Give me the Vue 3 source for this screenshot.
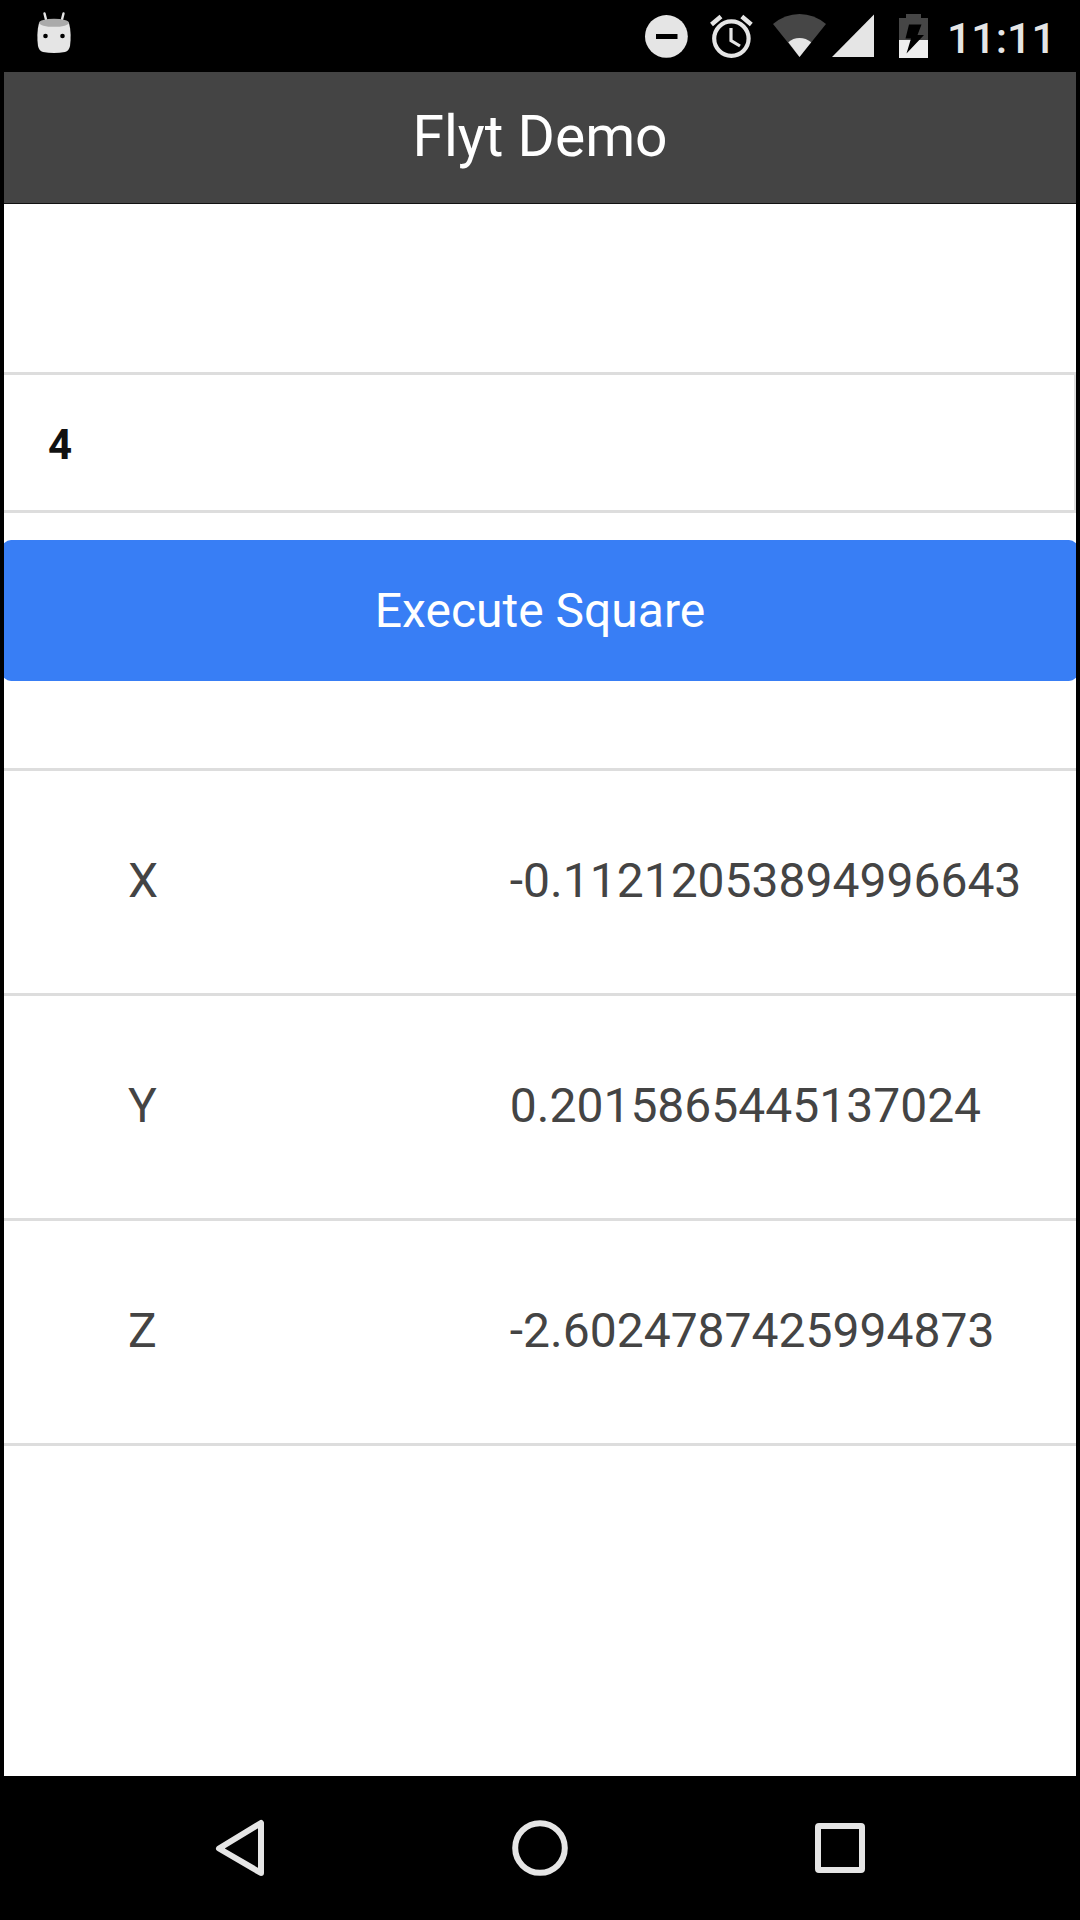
<script setup>
import { ref } from 'vue'

const side = ref('4')
const position = [
  { axis: 'X', value: '-0.11212053894996643' },
  { axis: 'Y', value: '0.2015865445137024' },
  { axis: 'Z', value: '-2.6024787425994873' },
]
</script>

<template>
  <div class="screen">
    <div class="status">
      <svg class="robot" width="36" height="48" viewBox="0 0 36 48" aria-hidden="true">
        <path d="M8.500 1.500l2 8M27.500 1.500l-2 8" stroke="#e5e5e5" stroke-width="2.400" stroke-linecap="round" />
        <path d="M3 11C1 18 1 27 2 34Q3 39 7 40Q18 42 29 40Q33 39 34 34C35 27 35 18 33 11Z" fill="#e5e5e5" />
        <ellipse cx="18" cy="10.800" rx="15" ry="4" fill="#aaa" />
        <circle cx="9.500" cy="24" r="2.300" fill="#000" />
        <circle cx="26.500" cy="24" r="2.300" fill="#000" />
      </svg>
      <div class="indicators">
        <svg width="46" height="48" viewBox="0 0 46 48" aria-hidden="true">
          <circle cx="22.400" cy="24.400" r="21.400" fill="#e5e5e5" />
          <path d="M12 22h21.500v5H12z" fill="#000" />
        </svg>
        <svg width="46" height="48" viewBox="0 0 46 48" fill="none" stroke="#e5e5e5" aria-hidden="true">
          <circle cx="23.400" cy="26.600" r="17.200" stroke-width="4.200" />
          <path d="M3.500 12.500l9.500-8M43.300 12.500l-9.500-8" stroke-width="4.500" />
          <path d="M23 16v12.500l9 5.500" stroke-width="3.200" />
        </svg>
        <div class="radio">
          <svg width="60" height="48" viewBox="0 0 60 48" aria-hidden="true">
            <path d="M27.500 45L1 12Q13 2 27.500 2T54 12Z" fill="#464646" />
            <path d="M27.500 45L16.300 30.300Q21 26 27.500 26T39.200 30.300Z" fill="#e5e5e5" />
          </svg>
          <svg width="48" height="48" viewBox="0 0 48 48" aria-hidden="true">
            <path d="M0 45L42 2.500V45Z" fill="#e5e5e5" />
          </svg>
        </div>
        <svg width="31" height="48" viewBox="0 0 31 48" aria-hidden="true">
          <path d="M1 6h7V2h15v4h7v22H1z" fill="#464646" />
          <path d="M1 28h29v18H1z" fill="#eee" />
          <path d="M11 12.500h12.500l-4 10.500h6.500L8.500 41.500l4.500-15H7.500z" fill="#000" />
        </svg>
        <time class="clock">11:11</time>
      </div>
    </div>

    <header class="bar">
      <h1>Flyt Demo</h1>
    </header>

    <main class="content">
      <input v-model="side" class="side" type="text" inputmode="decimal" aria-label="Side length" />
      <button class="execute" type="button">Execute Square</button>
      <table class="position">
        <tbody>
          <tr v-for="row in position" :key="row.axis">
            <th scope="row">{{ row.axis }}</th>
            <td>{{ row.value }}</td>
          </tr>
        </tbody>
      </table>
    </main>

    <nav class="keys">
      <button type="button" aria-label="Back">
        <svg width="60" height="60" viewBox="0 0 60 60">
          <path d="M51 5V55L9 30.500Z" fill="none" stroke="#e5e5e5" stroke-width="6" stroke-linejoin="round" />
        </svg>
      </button>
      <button type="button" aria-label="Home">
        <svg width="60" height="60" viewBox="0 0 60 60">
          <circle cx="30" cy="30" r="24.800" fill="none" stroke="#e5e5e5" stroke-width="6" />
        </svg>
      </button>
      <button type="button" aria-label="Overview">
        <svg width="60" height="60" viewBox="0 0 60 60">
          <path d="M9 5h42a4 4 0 0 1 4 4v42a4 4 0 0 1-4 4H9a4 4 0 0 1-4-4V9a4 4 0 0 1 4-4zM11 11v38h38V11z" fill="#e5e5e5" fill-rule="evenodd" />
        </svg>
      </button>
    </nav>
  </div>
</template>

<style>
body {
  margin: 0;
  background: #000;
}
</style>

<style scoped>
.screen {
  display: flex;
  flex-direction: column;
  min-height: 100vh;
  background: #000;
  color: #444;
  font-family: Roboto, "Noto Sans", sans-serif;
  font-size: 48px;
}

svg {
  display: block;
}

.status {
  display: flex;
  align-items: center;
  justify-content: space-between;
  height: 72px;
  padding: 0 24px 0 36px;
}

.indicators {
  display: flex;
  align-items: center;
  gap: 18px;
}

.radio {
  display: flex;
}

.clock {
  padding-top: 4px;
  color: #e5e5e5;
  font-size: 43px;
  font-weight: 500;
  line-height: 48px;
}

.bar {
  box-sizing: border-box;
  height: 132px;
  margin: 0 4px;
  border-bottom: 1px solid #111;
  background: #444;
}

h1 {
  margin: 0;
  color: #fff;
  font-size: 57px;
  font-weight: 400;
  line-height: 130px;
  text-align: center;
}

.content {
  flex: 1;
  margin: 0 4px;
  padding-top: 168px;
  overflow: hidden;
  background: #fff;
}

.side {
  display: block;
  box-sizing: border-box;
  width: 100%;
  height: 141px;
  padding: 4px 44px 0;
  border: solid #ddd;
  border-width: 3px 2px 3px 0;
  border-radius: 0;
  outline: 0;
  background: #fff;
  color: #111;
  font-family: inherit;
  font-size: 42px;
  font-weight: 700;
}

.execute {
  display: block;
  width: calc(100% + 4px);
  height: 141px;
  margin: 27px -2px 87px;
  padding: 0;
  border: 0;
  border-radius: 9px;
  background: #387ef5;
  color: #fff;
  font-family: inherit;
  font-size: 48px;
  line-height: 141px;
}

.position {
  width: 100%;
  border-collapse: collapse;
  border-top: 3px solid #ddd;
  table-layout: fixed;
}

.position tr {
  height: 225px;
  border-bottom: 3px solid #ddd;
}

.position th,
.position td {
  padding: 0 0 4px;
  font-weight: 400;
  text-align: left;
}

.position th {
  width: 47%;
  box-sizing: border-box;
  padding-left: 124px;
}

.position td {
  padding-left: 2px;
}

.keys {
  display: flex;
  height: 144px;
  padding: 0 90px;
}

.keys button {
  display: flex;
  flex: 1;
  align-items: center;
  justify-content: center;
  padding: 0;
  border: 0;
  background: none;
}
</style>
